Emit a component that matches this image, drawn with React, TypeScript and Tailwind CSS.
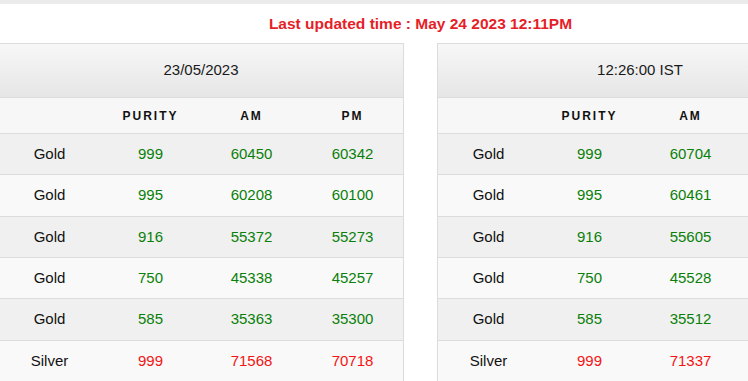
import React from 'react';

type Row = { metal: string; purity: string; am: string; pm: string };

const leftRows: Row[] = [
  { metal: 'Gold', purity: '999', am: '60450', pm: '60342' },
  { metal: 'Gold', purity: '995', am: '60208', pm: '60100' },
  { metal: 'Gold', purity: '916', am: '55372', pm: '55273' },
  { metal: 'Gold', purity: '750', am: '45338', pm: '45257' },
  { metal: 'Gold', purity: '585', am: '35363', pm: '35300' },
  { metal: 'Silver', purity: '999', am: '71568', pm: '70718' },
];

// PM column of the live table is outside the visible area
const rightRows: Row[] = [
  { metal: 'Gold', purity: '999', am: '60704', pm: '' },
  { metal: 'Gold', purity: '995', am: '60461', pm: '' },
  { metal: 'Gold', purity: '916', am: '55605', pm: '' },
  { metal: 'Gold', purity: '750', am: '45528', pm: '' },
  { metal: 'Gold', purity: '585', am: '35512', pm: '' },
  { metal: 'Silver', purity: '999', am: '71337', pm: '' },
];

function RateTable({ title, rows, showPm = true }: { title: string; rows: Row[]; showPm?: boolean }) {
  return (
    <div className="w-[406px] shrink-0 border border-b-0 border-[#dcdcdc]">
      <div className="h-[54px] flex items-center justify-center border-b border-[#dcdcdc] bg-gradient-to-b from-[#f7f7f7] to-[#e6e6e6] text-[15px] text-[#1a1a1a]">
        {title}
      </div>
      <div className="grid grid-cols-4 h-[36px] items-center border-b border-[#dcdcdc] bg-[#f7f7f7] text-[12px] font-bold tracking-[2px] text-[#111] text-center">
        <div />
        <div>PURITY</div>
        <div>AM</div>
        <div>{showPm ? 'PM' : ''}</div>
      </div>
      {rows.map((r, i) => {
        // silver prices are shown in red, gold in green
        const tone = r.metal === 'Silver' ? 'text-[#f21414]' : 'text-[#0a800a]';
        return (
          <div
            key={i}
            className={`grid grid-cols-4 h-[41.33px] items-center border-b border-[#dcdcdc] text-center text-[15px] ${
              i % 2 === 0 ? 'bg-[#f0f0f0]' : 'bg-[#f9f9f9]'
            }`}
          >
            <div className="text-[#111]">{r.metal}</div>
            <div className={tone}>{r.purity}</div>
            <div className={tone}>{r.am}</div>
            <div className={tone}>{r.pm}</div>
          </div>
        );
      })}
    </div>
  );
}

export default function App() {
  return (
    <div className="w-[748px] h-[381px] overflow-hidden bg-white font-['Liberation_Sans',Arial,sans-serif]">
      <div className="h-[4px] bg-[#ebebeb]" />
      <div className="w-[845px] -ml-[2px]">
        <div className="h-[39px] flex items-center justify-center">
          <span className="text-[15.5px] font-bold text-[#e61e28]">
            Last updated time : May 24 2023 12:11PM
          </span>
        </div>
        <div className="flex gap-[33px]">
          <RateTable title="23/05/2023" rows={leftRows} />
          <RateTable title="12:26:00 IST" rows={rightRows} showPm={false} />
        </div>
      </div>
    </div>
  );
}
